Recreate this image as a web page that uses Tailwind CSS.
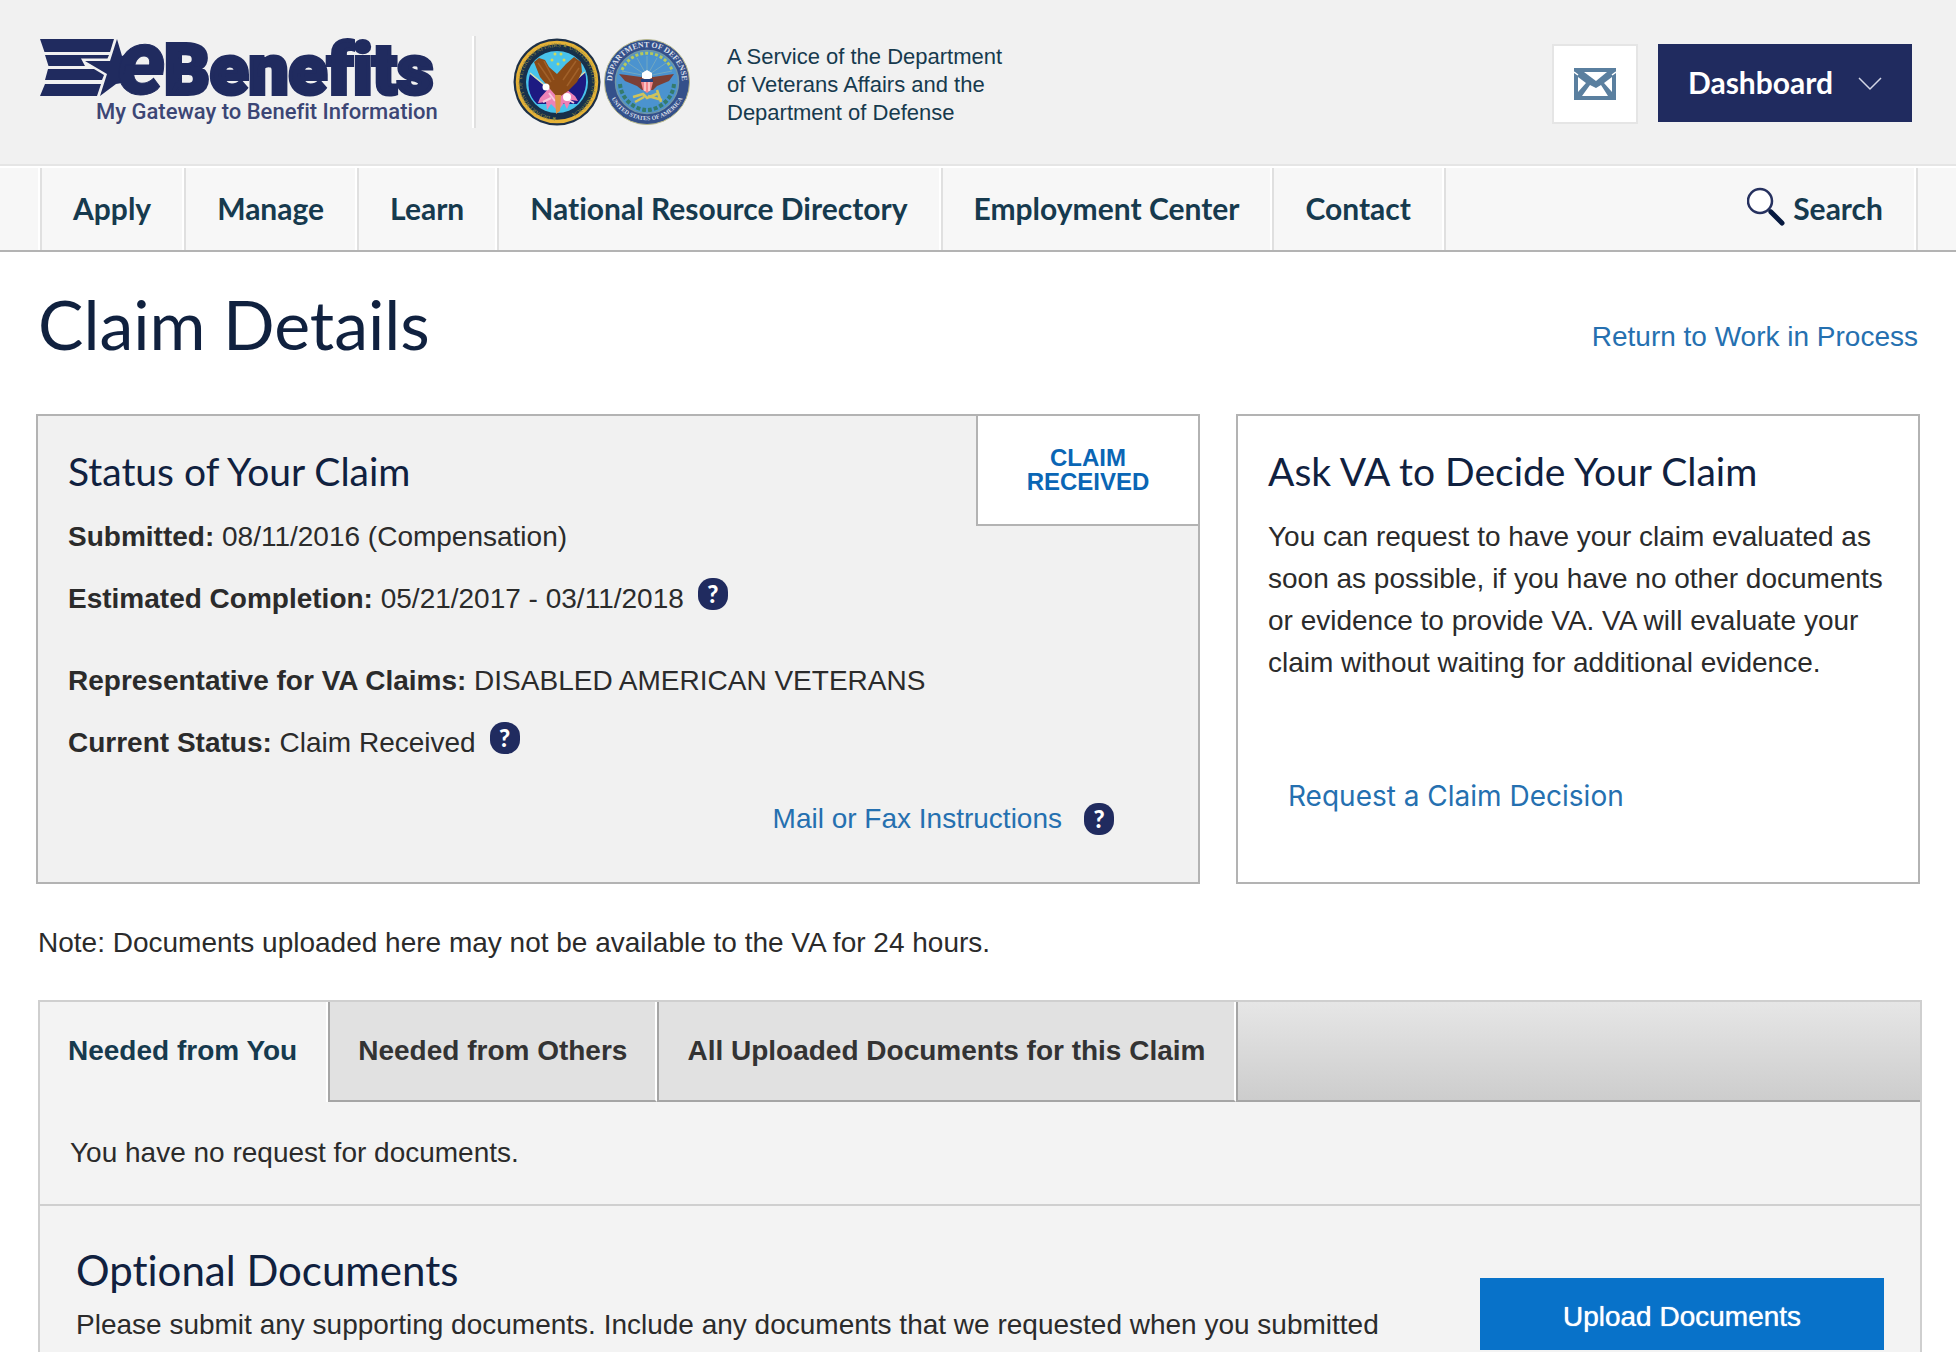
<!DOCTYPE html>
<html lang="en">
<head>
<meta charset="utf-8">
<meta name="viewport" content="width=device-width, initial-scale=1">
<title>eBenefits - Claim Details</title>
<script src="https://cdn.jsdelivr.net/npm/@tailwindcss/browser@4"></script>
</head>
<body class="flex min-h-screen flex-col bg-white font-['Liberation_Sans',Arial,sans-serif] text-[28px] leading-[42px] text-[#2b2b2b] [font-variant-ligatures:none]">

<header class="flex items-center border-b-2 border-[#e5e5e5] bg-[#f1f1f1] py-9 pr-11 pl-10">
  <a href="#" aria-label="eBenefits home" class="shrink-0">
    <svg class="overflow-visible" width="396" height="88" viewBox="0 0 396 88" fill="#202b5f">
      <!-- striped flag with star -->
      <path d="M0 1H74L70 14H4.500Z"/>
      <path d="M5 17H69L67.500 20.500H41L45 28H8.500Z"/>
      <path d="M8 31H54L64 37L62 42H5Z"/>
      <path d="M5 46H61L57 58H0Z"/>
      <path d="M77 1L82 18L92 14L88 44L76 46L60 58L67 36L45 23H70Z"/>
      <text x="77" y="56" font-family="Roboto, sans-serif" font-weight="900" font-style="italic" font-size="92" stroke="#202b5f" stroke-width="1">e</text>
      <text x="124" y="56" font-family="Roboto, sans-serif" font-weight="900" font-size="71" stroke="#202b5f" stroke-width="4">Benefits</text>
      <text x="56" y="81" font-family="Roboto, sans-serif" font-weight="500" font-size="22" fill="#3c4675">My Gateway to Benefit Information</text>
    </svg>
  </a>
  <div class="ml-9 h-[92px] w-1 shrink-0 border-r-2 border-l-2 border-l-white border-r-[#e0e0e0]"></div>

  <div class="ml-[37px] flex shrink-0 gap-[3px]">
    <svg width="88" height="88" viewBox="0 0 88 88" role="img" aria-label="Department of Veterans Affairs seal">
      <defs><path id="vaRing" d="M44 79A35 35 0 1 1 44.100 79"/></defs>
      <circle cx="44" cy="44" r="43.500" fill="#1d3047"/>
      <circle cx="44" cy="44" r="39.500" fill="none" stroke="#e5b237" stroke-width="3.500"/>
      <circle cx="44" cy="44" r="37" fill="#17304a"/>
      <text font-family="Liberation Serif, serif" font-size="6" fill="#8d8a45"><textPath href="#vaRing">★ DEPARTMENT OF VETERANS AFFAIRS ★ UNITED STATES OF AMERICA</textPath></text>
      <circle cx="44" cy="44" r="31" fill="#48c3ec"/>
      <path d="M17 36L37 52L44 70L52 53L72 34C75 46 72 57 64 66L24 66C15 57 14 46 17 36Z" fill="#1d1a82"/>
      <path d="M17 35L41 55M72 34L50 53" stroke="#dbd9ad" stroke-width="1.500"/>
      <path d="M27 60L36 50L43 56L53 51L62 58L65 63L58 62L54 71L51 65L45 73L38 66L34 72L33 64L25 65Z" fill="#ed82b6"/>
      <path d="M30 64L38 60M52 60L61 65M36 55L42 63" stroke="#f7c7dd" stroke-width="2"/>
      <path d="M21 24L26 20L32 22L36 29L44 36L53 26L61 19L68 24L69 34L64 44L55 53L45 60L37 51L27 39Z" fill="#8a4a17"/>
      <path d="M25 25L38 44M31 23L41 42M63 23L50 42M66 30L54 48" stroke="#a1612a" stroke-width="1.500"/>
      <circle cx="33" cy="49" r="3.500" fill="#fff"/><circle cx="54" cy="59" r="4" fill="#fff"/>
      <path d="M42 57L48 57L47 73L43 76Z" fill="#de9645"/>
      <g fill="#cfd95c"><circle cx="42" cy="16" r="1.500"/><circle cx="48" cy="16" r="1.500"/><circle cx="39" cy="22" r="1.500"/><circle cx="51" cy="22" r="1.500"/><circle cx="45" cy="26" r="1.500"/></g>
    </svg>
    <svg width="86" height="88" viewBox="0 0 86 88" role="img" aria-label="Department of Defense seal">
      <defs>
        <path id="dodTop" d="M8.500 50A35 35 0 1 1 77.500 50"/>
        <path id="dodLow" d="M4.500 53A40 40 0 0 0 81.500 53"/>
      </defs>
      <circle cx="43" cy="44" r="42.500" fill="#34508a" stroke="#b9b98c" stroke-width="1"/>
      <text font-family="Liberation Serif, serif" font-weight="700" font-size="8" fill="#d9dfe8"><textPath href="#dodTop" startOffset="50%" text-anchor="middle">DEPARTMENT OF DEFENSE</textPath></text>
      <text font-family="Liberation Serif, serif" font-weight="700" font-size="6" fill="#d9dfe8"><textPath href="#dodLow" startOffset="50%" text-anchor="middle">UNITED STATES OF AMERICA</textPath></text>
      <circle cx="43" cy="44" r="31.500" fill="#4b93cf" stroke="#6f97a8" stroke-width="1.500"/>
      <path d="M43 38L18 33M43 38L24 25M43 38L33 20M43 38V18M43 38L53 20M43 38L62 25M43 38L68 33" stroke="#72a7c0" stroke-width="1"/>
      <path d="M18 32A27 27 0 0 1 68 32" fill="none" stroke="#b6c95c" stroke-width="3" stroke-dasharray="3 2"/>
      <path d="M16 46C17 60 29 71 42 72M70 46C69 60 57 71 44 72" fill="none" stroke="#347b6c" stroke-width="4" stroke-dasharray="4 2"/>
      <path d="M15 36L37 39L43 36L49 39L70 36L65 43L53 48L49 52H38L33 48L21 43Z" fill="#7c3f35"/>
      <path d="M38 35L43 32L48 35V40L43 42L38 40Z" fill="#fff"/>
      <path d="M37 41H49V44H37Z" fill="#24407e"/>
      <path d="M37 44H49L47 52L43 55L39 52Z" fill="#f3878b"/>
      <path d="M41 44V53M45 44V53" stroke="#fff" stroke-width="1"/>
      <path d="M29 59L39 56L43 60L55 55M31 64L40 59M44 58L58 62M53 52L57 64" fill="none" stroke="#cfc35b" stroke-width="2.500"/>
    </svg>
  </div>

  <p class="ml-[37px] max-w-[290px] pt-1.5 text-[22px] leading-7 text-[#163a4e]">A Service of the Department of Veterans Affairs and the Department of Defense</p>

  <div class="ml-auto flex shrink-0 items-start gap-5 pt-1">
    <a href="#" aria-label="Messages" class="flex h-20 w-[86px] items-center justify-center border-2 border-[#e5e5e5] bg-white">
      <svg width="42" height="32" viewBox="0 0 42 32">
        <path d="M0 0H42V32H0Z" fill="#5a7f9f"/>
        <path d="M10 4H33L22 13Z" fill="#fff"/>
        <path d="M4 9L12 15L4 24ZM38 9L30 15L38 24Z" fill="#fff"/>
        <path d="M8 28L16 17L22 20L27 17L34 28Z" fill="#fff"/>
        <path d="M0 4L4 7M42 4L38 7" stroke="#fff" stroke-width="1.500"/>
      </svg>
    </a>
    <button type="button" class="flex h-[78px] w-[254px] items-center justify-between bg-[#202b5f] pr-[30px] pb-0.5 pl-[30px] font-[Lato,sans-serif] text-[30px] font-bold text-white">
      Dashboard
      <svg class="mt-1" width="24" height="14" viewBox="0 0 24 14" fill="none" stroke="#d3d6e6" stroke-width="1.500"><path d="M1 1L12 12L23 1"/></svg>
    </button>
  </div>
</header>

<nav aria-label="Main" class="border-t-2 border-b-2 border-t-white border-b-[#b3b3b3] bg-[#f7f7f7] px-[38px] font-[Lato,sans-serif] text-[30px] font-bold text-[#163a4e]">
  <ul class="flex h-[82px] items-stretch border-r-2 border-l-2 border-l-white border-r-[#e0e0e0]">
    <li class="flex border-r-2 border-l-2 border-l-[#e0e0e0] border-r-white"><a href="#" class="flex items-center px-[31px] pb-0.5">Apply</a></li>
    <li class="flex border-r-2 border-l-2 border-l-[#e0e0e0] border-r-white"><a href="#" class="flex items-center px-[31px] pb-0.5">Manage</a></li>
    <li class="flex border-r-2 border-l-2 border-l-[#e0e0e0] border-r-white"><a href="#" class="flex items-center px-[31px] pb-0.5">Learn</a></li>
    <li class="flex border-r-2 border-l-2 border-l-[#e0e0e0] border-r-white"><a href="#" class="flex items-center px-[31px] pb-0.5">National Resource Directory</a></li>
    <li class="flex border-r-2 border-l-2 border-l-[#e0e0e0] border-r-white"><a href="#" class="flex items-center px-[31px] pb-0.5">Employment Center</a></li>
    <li class="flex border-r-2 border-l-2 border-l-[#e0e0e0] border-r-white"><a href="#" class="flex items-center px-[31px] pb-0.5">Contact</a></li>
    <li class="flex flex-1 justify-end border-r-2 border-l-2 border-l-[#e0e0e0] border-r-white">
      <a href="#" class="flex items-center gap-2 px-[31px] pb-0.5">
        <svg width="38" height="46" viewBox="0 0 38 46"><circle cx="13" cy="16" r="12" fill="#fff" stroke="#26315f" stroke-width="2.500"/><path d="M22 25L24 27" stroke="#26315f" stroke-width="3"/><path d="M24 27L35 38" stroke="#071a40" stroke-width="5" stroke-linecap="round"/></svg>
        Search
      </a>
    </li>
  </ul>
</nav>

<main class="flex flex-1 flex-col px-9 pt-8">
  <div class="flex items-end justify-between px-0.5">
    <h1 class="font-[Lato,sans-serif] text-[68px] leading-[80px] text-[#10213f]">Claim Details</h1>
    <a href="#" class="pb-1.5 text-[#2570b0]">Return to Work in Process</a>
  </div>

  <div class="mt-[50px] grid grid-cols-[97fr_57fr] gap-9">
    <section class="relative border-2 border-[#b3b3b3] bg-[#f1f1f1] px-[30px] pt-[31px] pb-[42px]">
      <strong class="absolute top-0 right-0 flex h-[110px] w-[222px] items-center justify-center border-b-2 border-l-2 border-[#b3b3b3] bg-white px-10 text-center text-2xl leading-6 text-[#0a66b5]">CLAIM RECEIVED</strong>
      <h2 class="font-[Lato,sans-serif] text-[39px] leading-[48px] text-[#10213f]">Status of Your Claim</h2>
      <p class="mt-[21px]"><b>Submitted:</b> 08/11/2016 (Compensation)</p>
      <p class="mt-5 flex items-start"><span><b>Estimated Completion:</b> 05/21/2017 - 03/11/2018</span><button type="button" aria-label="Help with estimated completion" class="ml-[14px] h-8 w-[30px] rounded-[14px] bg-[#202b5f] text-center font-[Lato,sans-serif] text-2xl leading-8 font-black text-white">?</button></p>
      <p class="mt-10"><b>Representative for VA Claims:</b> DISABLED AMERICAN VETERANS</p>
      <p class="mt-5 flex items-start"><span><b>Current Status:</b> Claim Received</span><button type="button" aria-label="Help with current status" class="ml-[14px] h-8 w-[30px] rounded-[14px] bg-[#202b5f] text-center font-[Lato,sans-serif] text-2xl leading-8 font-black text-white">?</button></p>
      <p class="mt-[34px] flex items-center justify-end pr-[54px]"><a href="#" class="text-[#2570b0]">Mail or Fax Instructions</a><button type="button" aria-label="Help with mail or fax" class="ml-[22px] h-8 w-[30px] rounded-[14px] bg-[#202b5f] text-center font-[Lato,sans-serif] text-2xl leading-8 font-black text-white">?</button></p>
    </section>

    <section class="border-2 border-[#b3b3b3] bg-white px-[30px] pt-[31px]">
      <h2 class="font-[Lato,sans-serif] text-[39px] leading-[48px] text-[#10213f]">Ask VA to Decide Your Claim</h2>
      <p class="mt-[21px]">You can request to have your claim evaluated as soon as possible, if you have no other documents or evidence to provide VA. VA will evaluate your claim without waiting for additional evidence.</p>
      <a href="#" class="mt-[91px] ml-5 inline-block font-[Inter,sans-serif] text-[#2570b0]">Request a Claim Decision</a>
    </section>
  </div>

  <p class="mt-[38px] pl-0.5">Note: Documents uploaded here may not be available to the VA for 24 hours.</p>

  <section class="mt-9 -mr-0.5 ml-0.5 flex-1 border-2 border-b-0 border-[#cfcfcf] bg-[#f3f3f3]">
    <div role="tablist" class="flex h-[100px] font-bold text-[#333333]">
      <button type="button" role="tab" aria-selected="true" class="border-r-2 border-white pr-[29px] pb-0.5 pl-7 text-[#163a4e]">Needed from You</button>
      <button type="button" role="tab" aria-selected="false" class="border-r-2 border-b-2 border-l-2 border-[#a5a5a5] border-r-white bg-[#e1e1e1] px-7">Needed from Others</button>
      <button type="button" role="tab" aria-selected="false" class="border-r-2 border-b-2 border-l-2 border-[#a5a5a5] border-r-white bg-[#e1e1e1] pr-[29px] pl-7">All Uploaded Documents for this Claim</button>
      <div class="flex-1 border-b-2 border-l-2 border-[#a5a5a5] bg-linear-to-b from-[#e6e6e6] to-[#cdcdcd]"></div>
    </div>
    <p class="border-b-2 border-[#cfcfcf] p-[30px]">You have no request for documents.</p>
    <div class="flex items-start justify-between gap-20 px-9">
      <div class="pt-[39px]">
        <h2 class="font-[Lato,sans-serif] text-[42px] leading-[50px] text-[#10213f]">Optional Documents</h2>
        <p class="mt-[9px]">Please submit any supporting documents. Include any documents that we requested when you submitted</p>
      </div>
      <button type="button" class="mt-[72px] h-[72px] w-[404px] shrink-0 bg-[#0872c9] pt-1.5 text-white text-shadow-[0_0_1px_#ffffff]">Upload Documents</button>
    </div>
  </section>
</main>
</body>
</html>
